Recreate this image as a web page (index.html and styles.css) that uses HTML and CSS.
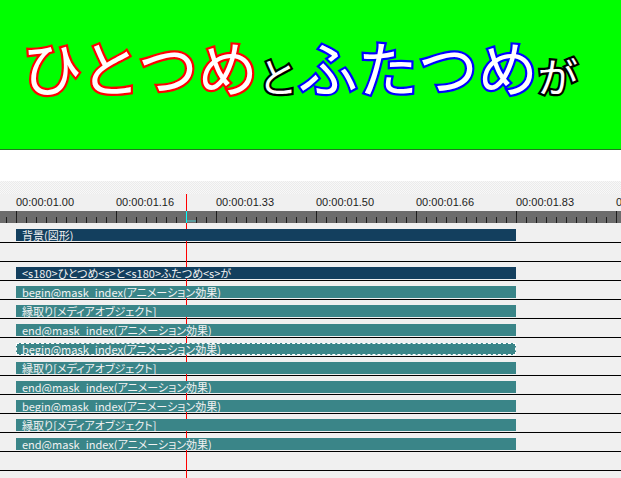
FILE: index.html
```html
<!DOCTYPE html>
<html lang="ja">
<head>
<meta charset="utf-8">
<title>Timeline</title>
<link rel="stylesheet" href="styles.css">
</head>
<body>
<div class="preview">
  <div class="caption"><span class="big red">ひとつめ</span><span class="small plain">と</span><span class="big blue">ふたつめ</span><span class="small plain">が</span></div>
</div>
<div class="spacer"></div>
<div class="checker"></div>
<div class="timeline">
  <div class="cursor"></div>
  <div class="labels">
    <span class="label">00:00:01.00</span>
    <span class="label">00:00:01.16</span>
    <span class="label">00:00:01.33</span>
    <span class="label">00:00:01.50</span>
    <span class="label">00:00:01.66</span>
    <span class="label">00:00:01.83</span>
    <span class="label">00:00:02.00</span>
  </div>
  <div class="band"><span class="mark"></span></div>
  <div class="tracks">
    <div class="row"><div class="bar dark">背景(図形)</div></div>
    <div class="row"></div>
    <div class="row"><div class="bar dark">&lt;s180&gt;ひとつめ&lt;s&gt;と&lt;s180&gt;ふたつめ&lt;s&gt;が</div></div>
    <div class="row"><div class="bar teal">begin@mask_index(アニメーション効果)</div></div>
    <div class="row"><div class="bar teal">縁取り[メディアオブジェクト]</div></div>
    <div class="row"><div class="bar teal">end@mask_index(アニメーション効果)</div></div>
    <div class="row"><div class="bar teal selected">begin@mask_index(アニメーション効果)</div></div>
    <div class="row"><div class="bar teal">縁取り[メディアオブジェクト]</div></div>
    <div class="row"><div class="bar teal">end@mask_index(アニメーション効果)</div></div>
    <div class="row"><div class="bar teal">begin@mask_index(アニメーション効果)</div></div>
    <div class="row"><div class="bar teal">縁取り[メディアオブジェクト]</div></div>
    <div class="row"><div class="bar teal">end@mask_index(アニメーション効果)</div></div>
    <div class="row"></div>
    <div class="row"></div>
  </div>
</div>
</body>
</html>
```

FILE: styles.css
```css
html, body {
  margin: 0;
  padding: 0;
  background: #ffffff;
  overflow: hidden;
}
body {
  width: 621px;
  height: 478px;
  font-family: "Liberation Sans", Arial, sans-serif;
}

.preview {
  height: 149px;
  background: #00ff00;
  border-bottom: 1px solid #1f7a1f;
}
.caption {
  padding: 36px 0 0 22px;
  font-family: "Noto Sans CJK JP", sans-serif;
  font-weight: 400;
  line-height: 60px;
  font-size: 60px;
  white-space: nowrap;
  color: #ffffff;
}
.caption span {
  paint-order: stroke fill;
  -webkit-text-stroke-width: 4.5px;
}
.big { font-size: 60px; }
.small { font-size: 40px; }
.red { -webkit-text-stroke-color: #ff0000; }
.blue { -webkit-text-stroke-color: #0000ff; }
.plain { -webkit-text-stroke-color: #000000; }

.spacer {
  height: 31px;
  background: #ffffff;
}
.checker {
  height: 13px;
  background-color: #f6f6f6;
  background-image: repeating-conic-gradient(#ebebeb 0 25%, #f8f8f8 0 50%);
  background-size: 2px 2px;
}

.timeline {
  position: relative;
  height: 284px;
  background: #f0f0f0;
  overflow: hidden;
}
.cursor {
  position: absolute;
  left: 186px;
  top: 0;
  bottom: 0;
  width: 1px;
  background: #ff0000;
  z-index: 1;
}
.labels {
  display: flex;
  height: 17px;
  padding-left: 16px;
  font-size: 11px;
  line-height: 17px;
  color: #1c1c1c;
  white-space: nowrap;
}
.label {
  flex: 0 0 100px;
}
.band {
  position: relative;
  z-index: 2;
  height: 12px;
  background-color: #6c6c6c;
  background-image:
    linear-gradient(to right, #1e1e1e 0 1px, transparent 1px),
    linear-gradient(to right, #1e1e1e 0 1px, transparent 1px);
  background-size: 100px 12px, 10px 6px;
  background-position: 16px 0, 6px 100%;
  background-repeat: repeat-x, repeat-x;
}
.mark {
  position: absolute;
  left: 186px;
  top: 0;
  width: 1px;
  height: 12px;
  background: #00ffff;
}
.mark::after {
  content: "";
  position: absolute;
  left: 1px;
  top: 9px;
  width: 9px;
  height: 2px;
  background: #5a9a9c;
}
.tracks {
  padding-top: 1px;
}
.row {
  height: 13px;
  padding-top: 5px;
  border-bottom: 1px solid #000000;
}
.bar {
  position: relative;
  z-index: 2;
  margin-left: 16px;
  width: 494px;
  height: 12px;
  padding-left: 6px;
  overflow: hidden;
  font-family: "Noto Sans CJK JP", sans-serif;
  font-feature-settings: "palt" 1;
  font-size: 11px;
  line-height: 12px;
  color: #f2f2f2;
  white-space: nowrap;
}
.dark { background: #133f5e; }
.teal { background: #3a8588; }
.selected {
  outline: 1px dashed #ffffff;
  outline-offset: -1px;
}
```
